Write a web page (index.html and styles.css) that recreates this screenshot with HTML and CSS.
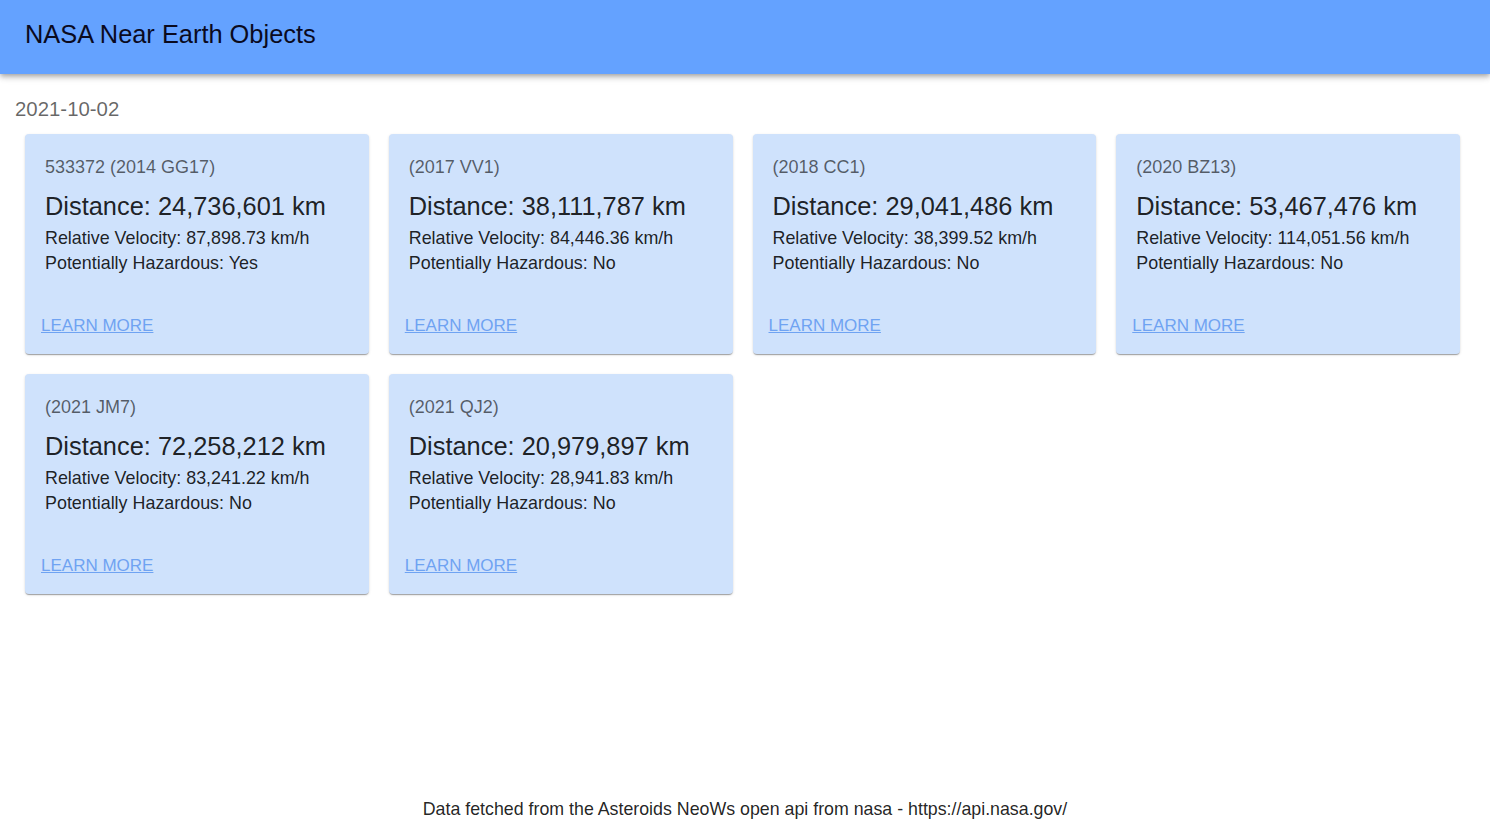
FILE: index.html
```html
<!DOCTYPE html>
<html lang="en">
<head>
<meta charset="utf-8">
<title>NASA Near Earth Objects</title>
<link rel="stylesheet" href="styles.css">
</head>
<body>
<div class="page">
  <header class="appbar">
    <h1 class="appbar-title">NASA Near Earth Objects</h1>
  </header>
  <main class="main">
    <h2 class="date">2021-10-02</h2>
    <div class="grid">
      <div class="card">
        <div class="card-content">
          <div class="neo-name">533372 (2014 GG17)</div>
          <div class="neo-distance">Distance: 24,736,601 km</div>
          <div class="neo-line">Relative Velocity: 87,898.73 km/h</div>
          <div class="neo-line">Potentially Hazardous: Yes</div>
        </div>
        <div class="card-actions"><a class="learn" href="#">Learn More</a></div>
      </div>
      <div class="card">
        <div class="card-content">
          <div class="neo-name">(2017 VV1)</div>
          <div class="neo-distance">Distance: 38,111,787 km</div>
          <div class="neo-line">Relative Velocity: 84,446.36 km/h</div>
          <div class="neo-line">Potentially Hazardous: No</div>
        </div>
        <div class="card-actions"><a class="learn" href="#">Learn More</a></div>
      </div>
      <div class="card">
        <div class="card-content">
          <div class="neo-name">(2018 CC1)</div>
          <div class="neo-distance">Distance: 29,041,486 km</div>
          <div class="neo-line">Relative Velocity: 38,399.52 km/h</div>
          <div class="neo-line">Potentially Hazardous: No</div>
        </div>
        <div class="card-actions"><a class="learn" href="#">Learn More</a></div>
      </div>
      <div class="card">
        <div class="card-content">
          <div class="neo-name">(2020 BZ13)</div>
          <div class="neo-distance">Distance: 53,467,476 km</div>
          <div class="neo-line">Relative Velocity: 114,051.56 km/h</div>
          <div class="neo-line">Potentially Hazardous: No</div>
        </div>
        <div class="card-actions"><a class="learn" href="#">Learn More</a></div>
      </div>
      <div class="card">
        <div class="card-content">
          <div class="neo-name">(2021 JM7)</div>
          <div class="neo-distance">Distance: 72,258,212 km</div>
          <div class="neo-line">Relative Velocity: 83,241.22 km/h</div>
          <div class="neo-line">Potentially Hazardous: No</div>
        </div>
        <div class="card-actions"><a class="learn" href="#">Learn More</a></div>
      </div>
      <div class="card">
        <div class="card-content">
          <div class="neo-name">(2021 QJ2)</div>
          <div class="neo-distance">Distance: 20,979,897 km</div>
          <div class="neo-line">Relative Velocity: 28,941.83 km/h</div>
          <div class="neo-line">Potentially Hazardous: No</div>
        </div>
        <div class="card-actions"><a class="learn" href="#">Learn More</a></div>
      </div>
    </div>
  </main>
  <footer class="footer">Data fetched from the Asteroids NeoWs open api from nasa - https://api.nasa.gov/</footer>
</div>
</body>
</html>
```

FILE: styles.css
```css
* { box-sizing: border-box; }
html, body { margin: 0; padding: 0; }
body {
  font-family: "Liberation Sans", Arial, sans-serif;
  color: rgba(0,0,0,0.87);
  background: #fff;
}
.page {
  min-height: 100vh;
  display: flex;
  flex-direction: column;
}
.appbar {
  height: 74px;
  background: #64a2ff;
  display: flex;
  align-items: center;
  padding: 0 25px;
  box-shadow: 0 2px 4px -1px rgba(0,0,0,0.2), 0 4px 5px 0 rgba(0,0,0,0.14), 0 1px 10px 0 rgba(0,0,0,0.12);
}
.appbar-title {
  margin: 0;
  font-size: 25.4px;
  font-weight: 400;
  line-height: 32px;
  color: #0a0a1e;
  padding-bottom: 6px;
}
.main {
  padding: 23px 15px 0;
}
.date {
  margin: 0;
  font-size: 20.4px;
  font-weight: 400;
  line-height: 24px;
  color: rgba(0,0,0,0.6);
}
.grid {
  margin-top: 13px;
  padding-left: 10px;
  display: grid;
  grid-template-columns: repeat(4, 343.75px);
  gap: 20px;
}
.card {
  background: #cfe2fc;
  border-radius: 4px;
  height: 220px;
  display: flex;
  flex-direction: column;
  box-shadow: 0 2px 1px -1px rgba(0,0,0,0.2), 0 1px 1px 0 rgba(0,0,0,0.14), 0 1px 3px 0 rgba(0,0,0,0.12);
}
.card-content {
  padding: 21px 20px 0;
}
.neo-name {
  font-size: 18px;
  line-height: 24px;
  color: rgba(0,0,0,0.6);
}
.neo-distance {
  margin-top: 10px;
  font-size: 25.4px;
  line-height: 34px;
}
.neo-line {
  font-size: 17.9px;
  line-height: 25px;
}
.neo-distance + .neo-line { margin-top: 3px; }
.card-actions {
  margin-top: auto;
  padding: 0 16px 18px;
}
.learn {
  font-size: 17px;
  line-height: 20px;
  text-transform: uppercase;
  color: #6fa3f2;
  text-decoration: underline;
}
.footer {
  margin-top: auto;
  text-align: center;
  font-size: 17.8px;
  line-height: 20px;
  padding-bottom: 7px;
  color: rgba(0,0,0,0.87);
}
```
